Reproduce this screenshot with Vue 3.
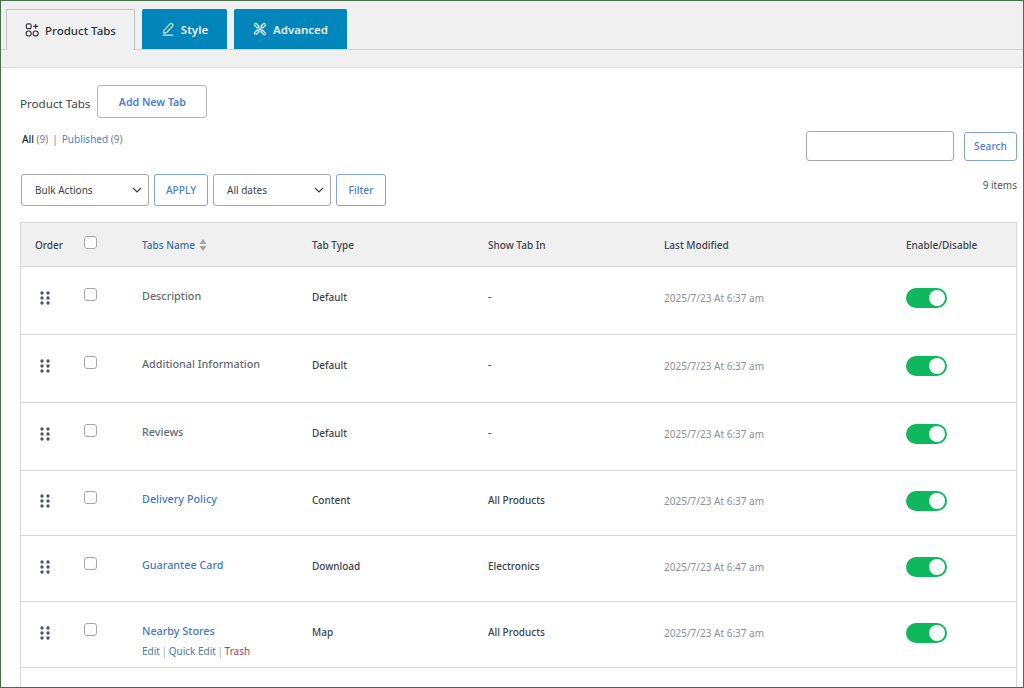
<template>
  <div class="page">
    <div class="top-band">
      <nav class="tabs">
        <a class="tab active">
          <svg class="tab-icon" viewBox="0 0 16 16" fill="none" stroke="currentColor" stroke-width="1.3">
            <rect x="1.5" y="1" width="5.5" height="5.5" rx="1.6" />
            <circle cx="4.2" cy="12" r="2.9" />
            <circle cx="12.2" cy="12" r="2.9" />
            <path d="M12.2 1v5.5M9.4 3.8H15" />
          </svg>
          Product Tabs
        </a>
        <a class="tab blue style-tab">
          <svg class="tab-icon" viewBox="0 0 16 16" fill="none" stroke="currentColor" stroke-width="1.3">
            <path d="M4.2 8.6 10.6 1.9c1.1-1 3.9 1 3 2.6L7 11.4c-1.2 1-3 1.4-4.2 1-.2-1.3.4-2.8 1.4-3.8z" />
            <path d="M2 15h12" />
          </svg>
          Style
        </a>
        <a class="tab blue adv-tab">
          <svg class="tab-icon" viewBox="0 0 16 16" fill="none" stroke="currentColor" stroke-width="1.4">
            <path d="M5.8 5.8 10.2 10.2l1-1 3 3.6c.4 1.2-.6 2-1.6 1.6l-3.4-3.2 1-1" />
            <path d="M5.8 5.8l-1 1-3-3C1.200 2.600 2.400 1.200 3.800 1.800l3 3z" />
            <path d="M10.200 5.800 5.800 10.200" />
            <path d="M9.200 4.800l2.500-2.700c1-1 3.200.400 2.400 2L11.200 6.800z" />
            <path d="M4.800 9.200 1.800 12c-.6 1.400.8 2.600 2.200 2l3-2.800z" />
          </svg>
          Advanced
        </a>
      </nav>
    </div>

    <main class="content">
      <div class="title-row">
        <span class="title">Product Tabs</span>
        <button class="add-btn">Add New Tab</button>
      </div>

      <div class="controls">
        <div class="controls-left">
          <div class="views">
            <b>All</b> <span class="count">(9)</span>
            <span class="sep">|</span>
            <a>Published</a> <span class="count">(9)</span>
          </div>
          <div class="actions">
            <div class="select bulk">
              Bulk Actions
              <svg class="chev" viewBox="0 0 10 6"><path d="M1 1l4 4 4-4" /></svg>
            </div>
            <button class="outline apply">APPLY</button>
            <div class="select dates">
              All dates
              <svg class="chev" viewBox="0 0 10 6"><path d="M1 1l4 4 4-4" /></svg>
            </div>
            <button class="outline filter">Filter</button>
          </div>
        </div>
        <div class="controls-right">
          <div class="search">
            <input class="search-input" type="text" />
            <button class="outline search-btn">Search</button>
          </div>
          <div class="items">9 items</div>
        </div>
      </div>

      <div class="table">
        <div class="row head">
          <div>Order</div>
          <div><span class="check"></span></div>
          <div class="sort">
            Tabs Name
            <svg class="sort-icon" viewBox="0 0 8 12"><path d="M4 0l3.5 5h-7zM4 12 .5 7h7z" /></svg>
          </div>
          <div>Tab Type</div>
          <div>Show Tab In</div>
          <div>Last Modified</div>
          <div>Enable/Disable</div>
        </div>

        <div v-for="t in tabs" :key="t.name" class="row body" :class="{ short: t.short }" :style="{ height: t.height + 'px' }">
          <div>
            <svg class="drag" viewBox="0 0 10 14">
              <circle v-for="d in dots" :key="d[0] + '-' + d[1]" :cx="d[0]" :cy="d[1]" r="1.7" />
            </svg>
          </div>
          <div><span class="check"></span></div>
          <div class="name-cell">
            <div class="name" :class="{ link: t.link }">{{ t.name }}</div>
            <div v-if="t.actions" class="row-actions">
              <a>Edit</a> <i>|</i> <a>Quick Edit</a> <i>|</i> <a class="trash">Trash</a>
            </div>
          </div>
          <div class="cell">{{ t.type }}</div>
          <div class="cell">{{ t.show }}</div>
          <div class="cell date">{{ t.date }}</div>
          <div><span class="toggle"></span></div>
        </div>
        <div class="more"></div>
      </div>
    </main>
  </div>
</template>

<script setup>
const dots = [[2, 2], [8, 2], [2, 7], [8, 7], [2, 12], [8, 12]]

const tabs = [
  { name: 'Description', type: 'Default', show: '-', date: '2025/7/23 At 6:37 am', height: 68 },
  { name: 'Additional Information', type: 'Default', show: '-', date: '2025/7/23 At 6:37 am', height: 68 },
  { name: 'Reviews', type: 'Default', show: '-', date: '2025/7/23 At 6:37 am', height: 68 },
  { name: 'Delivery Policy', type: 'Content', show: 'All Products', date: '2025/7/23 At 6:37 am', height: 65, link: true, short: true },
  { name: 'Guarantee Card', type: 'Download', show: 'Electronics', date: '2025/7/23 At 6:47 am', height: 66, link: true },
  { name: 'Nearby Stores', type: 'Map', show: 'All Products', date: '2025/7/23 At 6:37 am', height: 66, link: true, actions: true }
]
</script>

<style>
html,
body {
  margin: 0;
  overflow: hidden;
}
</style>

<style scoped>
.page {
  width: 1024px;
  height: 688px;
  box-sizing: border-box;
  border: 1px solid #44704b;
  background: #fff;
  font-family: "Noto Sans", "Open Sans", sans-serif;
  font-size: 10px;
  color: #3c434a;
  overflow: hidden;
}

.top-band {
  height: 67px;
  box-sizing: border-box;
  background: #f0f0f1;
  border-bottom: 1px solid #d8d8da;
  padding-top: 8px;
}

.tabs {
  height: 40px;
  display: flex;
  align-items: flex-end;
  gap: 7px;
  padding-left: 5px;
  border-bottom: 1px solid #d0d0d3;
}

.tab {
  height: 40px;
  box-sizing: border-box;
  display: flex;
  align-items: center;
  justify-content: center;
  gap: 6px;
  font-size: 11.5px;
  font-weight: 500;
}

.tab-icon {
  width: 14px;
  height: 14px;
}

.active {
  width: 129px;
  margin-bottom: -1px;
  height: 41px;
  background: #f0f0f1;
  border: 1px solid #c3c4c7;
  border-bottom: none;
  color: #2c3338;
}

.blue {
  background: #0185ba;
  color: #e6f1f7;
  font-weight: 600;
  border-radius: 2px 2px 0 0;
}

.style-tab {
  width: 85px;
}

.adv-tab {
  width: 113px;
}

.content {
  padding: 17px 6px 0 19px;
}

.title-row {
  display: flex;
  align-items: center;
  gap: 7px;
}

.title {
  font-size: 11.6px;
  padding-top: 3px;
}

.add-btn {
  width: 110px;
  height: 33px;
  background: #fff;
  border: 1px solid #b4b4b6;
  border-radius: 3px;
  color: #4a7fd4;
  font: 600 10.6px "Noto Sans", sans-serif;
}

.controls {
  display: flex;
  justify-content: space-between;
  margin-top: 14px;
}

.views {
  padding-left: 2px;
  font-size: 10px;
  line-height: 14px;
  color: #787c82;
}

.views b {
  font-weight: 500;
  color: #1d2327;
}

.views a {
  color: #4a7fd4;
}

.sep {
  margin: 0 4px;
}

.actions {
  display: flex;
  gap: 5px;
  margin-top: 28px;
  padding-left: 1px;
}

.select {
  height: 32px;
  box-sizing: border-box;
  display: flex;
  align-items: center;
  justify-content: space-between;
  padding: 0 6px 0 13px;
  border: 1px solid #a8a8aa;
  border-radius: 3px;
  color: #3c434a;
}

.bulk {
  width: 128px;
}

.dates {
  width: 118px;
}

.chev {
  width: 10px;
  height: 6px;
  fill: none;
  stroke: #3c434a;
  stroke-width: 1.2;
}

.outline {
  height: 32px;
  background: #fff;
  border: 1px solid #7da3e0;
  border-radius: 3px;
  color: #4a7fd4;
  font: 500 10.2px "Noto Sans", sans-serif;
  padding: 0;
}

.apply {
  width: 54px;
}

.filter {
  width: 50px;
}

.controls-right {
  display: flex;
  flex-direction: column;
  align-items: flex-end;
  margin-top: -1px;
}

.search {
  display: flex;
  align-items: center;
  gap: 10px;
}

.search-input {
  width: 148px;
  height: 30px;
  box-sizing: border-box;
  border: 1px solid #a8a8aa;
  border-radius: 3px;
  margin: 0;
}

.search-btn {
  width: 53px;
  height: 29px;
}

.items {
  margin-top: 17px;
  color: #50575e;
}

.table {
  margin-top: 16px;
  border: 1px solid #d6d6d8;
  border-bottom: none;
}

.row {
  display: grid;
  grid-template-columns: 49px 58px 170px 176px 176px 242px 1fr;
  padding-left: 14px;
  box-sizing: border-box;
  border-bottom: 1px solid #d6d6d8;
}

.more {
  height: 40px;
}

.head {
  height: 44px;
  background: #f0f0f1;
  align-items: center;
  font-weight: 500;
}

.sort {
  display: flex;
  align-items: center;
  gap: 4px;
  color: #3a6d9e;
}

.sort-icon {
  width: 8px;
  height: 12px;
  fill: #a3a3a6;
}

.check {
  display: block;
  width: 11px;
  height: 11px;
  border: 1px solid #a8a8aa;
  border-radius: 3px;
  background: #fff;
  margin-top: -4px;
}

.body > div {
  padding-top: 23px;
}

.body > div:nth-child(1) {
  padding-top: 24px;
  padding-left: 5px;
}

.body > div:nth-child(2) {
  padding-top: 25px;
}

.body > div.date {
  padding-top: 24px;
}

.body > div:nth-child(7) {
  padding-top: 22px;
}

.short > div {
  margin-top: -1px;
}

.body .check {
  margin-top: -4px;
}

.drag {
  display: block;
  width: 10px;
  height: 14px;
  fill: #50575e;
}

.name-cell {
  padding-top: 21px !important;
}

.name {
  font-size: 10.8px;
  font-weight: 500;
  line-height: 15px;
  color: #646970;
}

.name.link {
  color: #3f78cf;
}

.row-actions {
  margin-top: 6px;
  font-size: 10px;
  line-height: 14px;
  color: #a7aaad;
}

.row-actions a {
  color: #4a78ab;
}

.row-actions i {
  font-style: normal;
  margin: 0 -1px;
}

.row-actions .trash {
  color: #b0405a;
}

.cell {
  line-height: 15px;
  font-weight: 500;
  color: #3c434a;
}

.date {
  font-weight: 400;
  color: #8c8f94;
}

.toggle {
  display: block;
  position: relative;
  width: 41px;
  height: 20px;
  margin-top: -1px;
  border-radius: 10px;
  background: #0fb85c;
}

.toggle::after {
  content: "";
  position: absolute;
  right: 2px;
  top: 2px;
  width: 16px;
  height: 16px;
  border-radius: 50%;
  background: #fff;
}
</style>
